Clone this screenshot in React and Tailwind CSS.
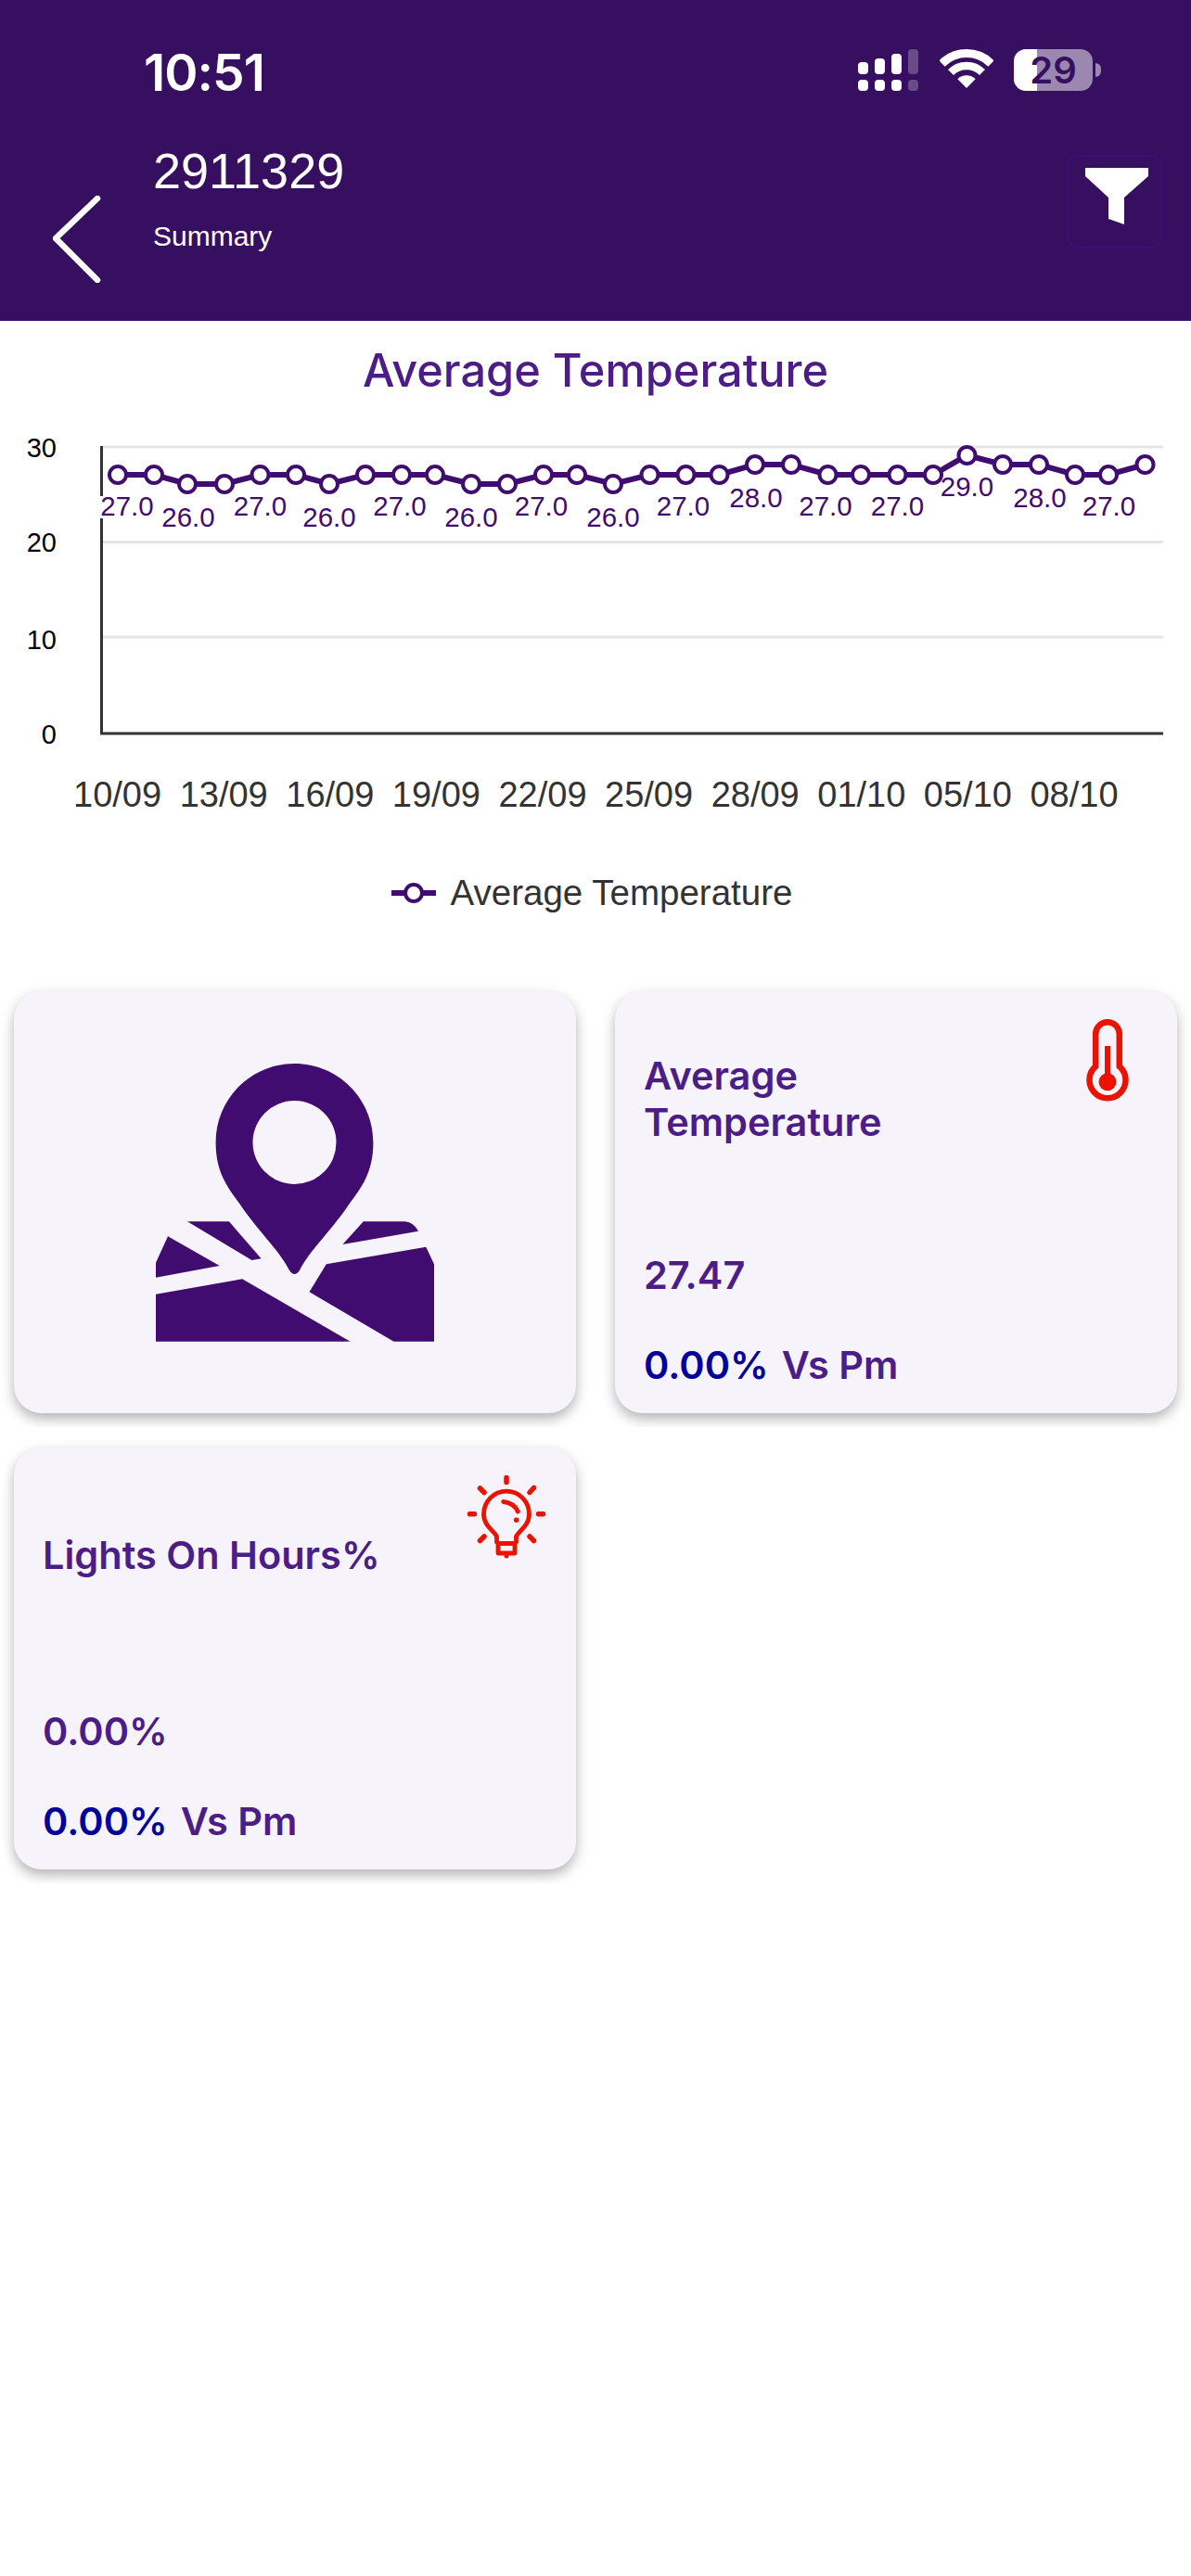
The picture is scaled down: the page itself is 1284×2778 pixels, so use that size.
const points = [
  [127, 27], [166, 27], [202, 26], [242, 26], [280.5, 27], [319, 27], [355, 26], [394, 27], [433, 27], [469, 27],
  [508, 26], [547, 26], [586, 27], [622, 27], [661, 26], [700.5, 27], [739.5, 27], [775.5, 27], [814, 28], [853, 28],
  [892.5, 27], [928, 27], [967.5, 27], [1006, 27], [1042.5, 29], [1081, 28], [1120, 28], [1159, 27], [1195, 27], [1234.5, 28],
]

const yFor = { 26: 522, 27: 512, 28: 501, 29: 491 }
const baseFor = { 26: 568, 27: 556, 28: 547, 29: 535 }

const labels = [
  [137, 27], [203, 26], [280.5, 27], [355, 26], [431, 27], [508, 26], [583.5, 27], [661, 26],
  [736.5, 27], [815, 28], [890, 27], [967.5, 27], [1042.5, 29], [1121, 28], [1195.5, 27],
]

const dates = ['10/09', '13/09', '16/09', '19/09', '22/09', '25/09', '28/09', '01/10', '05/10', '08/10']

function StatusIcons() {
  return (
    <div className="flex items-start">
      <svg className="mr-[23px]" width="65" height="45" viewBox="925 53 65 45" fill="#fff">
        <rect x="925" y="67" width="11" height="13" rx="4" />
        <rect x="943" y="63" width="11" height="17" rx="4" />
        <rect x="961" y="58" width="11" height="22" rx="4" />
        <rect x="979" y="53" width="11" height="27" rx="4" fillOpacity="0.25" />
        <rect x="925" y="86" width="11" height="12" rx="4" />
        <rect x="943" y="86" width="11" height="12" rx="4" />
        <rect x="961" y="86" width="11" height="12" rx="4" />
        <rect x="979" y="86" width="11" height="12" rx="4" fillOpacity="0.25" />
      </svg>
      <svg className="mr-[22px]" width="58" height="42" viewBox="-29 -42 58 42" fill="none" stroke="#fff">
        <path d="M-26.5 -26.5A37.5 37.5 0 0 1 26.5 -26.5" strokeWidth="9" />
        <path d="M-17 -17A24 24 0 0 1 17 -17" strokeWidth="8.5" />
        <path d="M0 0L-9.7 -9.7A13.7 13.7 0 0 1 9.7 -9.7Z" fill="#fff" stroke="none" />
      </svg>
      <div className="flex items-center gap-[3px]">
        <div className="flex h-[45px] w-[85px] items-center justify-center rounded-[13px] bg-[linear-gradient(90deg,#ffffff_25px,#9b87b0_25px)] font-[Inter,sans-serif] text-[40px] font-semibold leading-none text-[#370f60]">
          29
        </div>
        <div className="h-[15px] w-[6px] rounded-r-full bg-[#9b87b0]" />
      </div>
    </div>
  )
}

function Header() {
  return (
    <div className="h-[346px] bg-[#370f60] text-white">
      <div className="flex items-start justify-between pl-[155px] pr-[97px] pt-[53px]">
        <span className="mt-[3px] font-[Inter,sans-serif] text-[55px] font-semibold leading-[45px] tracking-[-1px]">10:51</span>
        <StatusIcons />
      </div>
      <div className="mt-[53px] flex items-start pl-[57px] pr-[31px]">
        <svg className="mt-[57px]" width="52" height="94" viewBox="0 0 52 94" fill="none" stroke="#fff" strokeWidth="6.5" strokeLinecap="round" strokeLinejoin="round">
          <path d="M48 3L3 46L48 91" />
        </svg>
        <div className="ml-[56px] flex-1 font-['Liberation_Sans',sans-serif]">
          <div className="text-[54px] leading-[60px]">2911329</div>
          <div className="mt-[23px] text-[30px] leading-[36px]">Summary</div>
        </div>
        <div className="mt-[13px] h-[101px] w-[103px] rounded-[14px] border-2 border-[#3c0f78]">
          <svg width="99" height="97" viewBox="1152 169 99 97" fill="#fff">
            <path d="M1170 181H1238V190L1212 213V242L1195 236V213L1170 190Z" />
          </svg>
        </div>
      </div>
    </div>
  )
}

function TempChart() {
  const line = points.map(([x, v]) => `${x},${yFor[v]}`).join(' ')
  return (
    <svg className="block" width="1284" height="430" viewBox="0 460 1284 430" fontFamily="'Liberation Sans', sans-serif">
      {[482, 584.5, 687].map((y) => (
        <line key={y} x1="110" x2="1254" y1={y} y2={y} stroke="#e5e5e5" strokeWidth="3" />
      ))}
      <line x1="109.5" x2="109.5" y1="481" y2="792" stroke="#333" strokeWidth="3" />
      <line x1="108" x2="1254" y1="791" y2="791" stroke="#333" strokeWidth="3" />

      <g fontSize="29" fill="#000" textAnchor="end">
        <text x="61" y="493">30</text>
        <text x="61" y="595">20</text>
        <text x="61" y="700">10</text>
        <text x="61" y="802">0</text>
      </g>

      <polyline points={line} fill="none" stroke="#410c70" strokeWidth="6" />
      {points.map(([x, v]) => (
        <circle key={x} cx={x} cy={yFor[v]} r="9" fill="#fff" stroke="#410c70" strokeWidth="4" />
      ))}

      {/* first label sits on the axis and knocks it out */}
      <rect x="107" y="535" width="6" height="24" fill="#fff" />
      <g fontSize="29.5" fill="#410c70" textAnchor="middle">
        {labels.map(([x, v]) => (
          <text key={x} x={x} y={baseFor[v]}>{v}.0</text>
        ))}
      </g>

      <g fontSize="38" fill="#333" textAnchor="middle">
        {dates.map((d, i) => (
          <text key={d} x={126.6 + i * 114.6} y="870">{d}</text>
        ))}
      </g>
    </svg>
  )
}

function MapIcon() {
  return (
    <svg width="300" height="300" viewBox="168 1147 300 300" fill="#410c70">
      <path
        fillRule="evenodd"
        d="M317.5 1147C270.5 1147 232.6 1185 232.6 1232C232.6 1270 250 1285 263 1305C285 1335 302 1350 312 1370Q317.5 1378 323 1370C333 1350 350 1335 372 1305C385 1285 402.4 1270 402.4 1232C402.4 1185 364.5 1147 317.5 1147ZM317.5 1187A45 45 0 1 1 317.5 1277A45 45 0 1 1 317.5 1187Z"
      />
      <path d="M202 1317.3H247L281.6 1357.3L271.4 1359Z" />
      <path d="M181 1333.3L236.7 1365L168 1377.7V1361.7Z" />
      <path d="M168 1395.7L261.2 1379.3L377.6 1446.7H168Z" />
      <path d="M351.8 1363.3L459.2 1344.7L468 1363.3V1446.7H424.5L333.5 1393.3Z" />
      <path d="M391.8 1317.3H436.7Q446 1318 451 1327.7L369.4 1342Z" />
    </svg>
  )
}

function ThermometerIcon() {
  return (
    <svg width="90" height="90" viewBox="0 0 90 90" fill="none" stroke="#ec1200">
      <path d="M32.2 51V16A12.8 12.8 0 0 1 57.8 16V51A19.5 19.5 0 1 1 32.2 51Z" strokeWidth="6.5" />
      <rect x="42" y="29" width="6" height="32" fill="#ec1200" stroke="none" />
      <circle cx="45" cy="67.7" r="9.5" fill="#ec1200" stroke="none" />
    </svg>
  )
}

function BulbIcon() {
  return (
    <svg width="90" height="90" viewBox="0 0 90 90" fill="none" stroke="#ec1200" strokeWidth="4.8" strokeLinecap="round" strokeLinejoin="round">
      <path d="M45 2.5V7.5M5.5 41.7H10.5M79.5 41.7H84.5M16.5 14L21 18.5M74.5 13.5L70 18.5M16.5 70.5L21 66M74.5 70.5L70 66" strokeWidth="5.5" />
      <path d="M34.5 72V66C32 60 20.5 55 20.5 41.7A24.5 24.5 0 0 1 69.5 41.7C69.5 55 58 60 55.5 66V72" />
      <path d="M36 73.5H54V84H36Z" />
      <path d="M41.7 28.5C49 29.5 55 33.5 57.3 39" />
      <circle cx="55.7" cy="48.3" r="2.7" fill="#ec1200" stroke="none" />
      <circle cx="45" cy="87" r="2.5" fill="#ec1200" stroke="none" />
    </svg>
  )
}

function StatCard({ title, value, icon }) {
  return (
    <div className="overflow-hidden p-[15px]">
      <div className="flex h-[455px] flex-col rounded-[30px] bg-[#f6f4fa] pl-[31px] pr-[30px] pt-[30px] font-[Inter,sans-serif] text-[41.5px] font-semibold leading-[50px] text-[#4c1d87] shadow-[0_6px_14px_rgba(0,0,0,0.3)]">
        <div className="flex h-[172px] items-start justify-between">
          <div className="w-[400px] self-center">{title}</div>
          {icon}
        </div>
        <div className="mt-[79px]">{value}</div>
        <div className="mt-[47px] flex gap-[14px]">
          <span className="text-[#00009b]">0.00%</span>
          <span>Vs Pm</span>
        </div>
      </div>
    </div>
  )
}

export default function App() {
  return (
    <div className="min-h-[2778px] bg-white">
      <Header />
      <h1 className="mt-[24px] text-center font-[Inter,sans-serif] text-[48.7px] font-medium leading-[60px] text-[#4c1d87]">
        Average Temperature
      </h1>
      <div className="mt-[30px]">
        <TempChart />
      </div>
      <div className="mt-[51px] flex items-center justify-center gap-[16px] pr-[8px] font-['Liberation_Sans',sans-serif] text-[38.5px] leading-[44px] text-[#333]">
        <svg width="48" height="24" viewBox="0 0 48 24">
          <line x1="0" x2="48" y1="12" y2="12" stroke="#410c70" strokeWidth="6" />
          <circle cx="24" cy="12" r="9" fill="#fff" stroke="#410c70" strokeWidth="4" />
        </svg>
        <span>Average Temperature</span>
      </div>
      <div className="mt-[69px] grid grid-cols-2 gap-x-[12px] gap-y-[7px]">
        <div className="overflow-hidden p-[15px]">
          <div className="flex h-[455px] items-center justify-center rounded-[30px] bg-[#f6f4fa] shadow-[0_6px_14px_rgba(0,0,0,0.3)]">
            <MapIcon />
          </div>
        </div>
        <StatCard title="Average Temperature" value="27.47" icon={<ThermometerIcon />} />
        <StatCard title="Lights On Hours%" value="0.00%" icon={<BulbIcon />} />
      </div>
    </div>
  )
}
